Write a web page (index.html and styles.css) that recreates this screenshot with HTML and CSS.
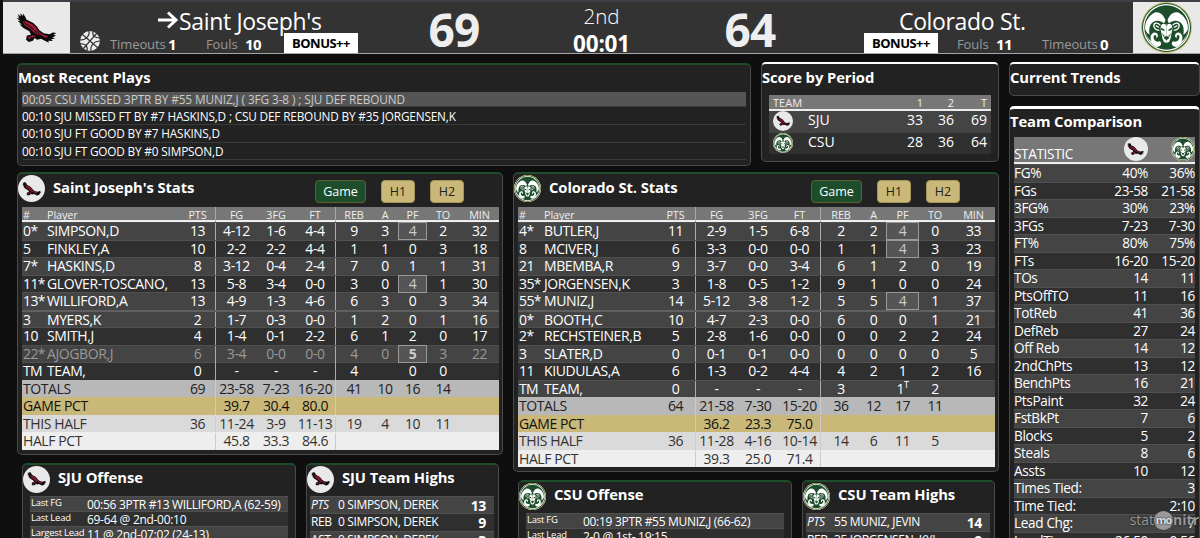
FILE: index.html
```html
<!DOCTYPE html>
<html lang="en">
<head>
    <meta charset="UTF-8">
    <meta name="viewport" content="width=device-width, initial-scale=1.0">
    <title>StatMonitr - Saint Joseph's vs Colorado St.</title>
    <link rel="stylesheet" href="styles.css">
</head>
<body>

<!-- shared logos -->
<svg class="defs" width="0" height="0">
    <symbol id="hawk" viewBox="0 0 124 92">
        <path fill="#0c0a0b" d="M1 8 9 14 4 3 14 11 12 1 21 9 20 1 28 12 31 20 52 31 64 42 70 52 84 62 102 65 112 60 123 61 114 67 122 70 111 74 119 79 107 80 112 86 98 85 100 91 86 84 76 79 64 82 56 77 51 85 38 89 30 82 32 70 45 66 40 56 22 46 10 35 17 36 4 24 13 25 1 15 10 17Z"/>
        <path fill="#9e1b34" d="M19 25 32 26 50 35 61 45 66 55 84 67 98 71 92 77 76 70 62 64 52 58 42 48 26 38Z"/>
        <path fill="#9e1b34" d="M35 74 50 68 62 70 54 74 44 75 42 83Z"/>
        <path stroke="#0c0a0b" stroke-width="3" fill="none" d="M24 30 48 46 62 60M62 56 84 76"/>
    </symbol>
    <symbol id="ram" viewBox="0 0 100 100">
        <circle cx="50" cy="50" r="50" fill="#c8c372"/>
        <circle cx="50" cy="50" r="48" fill="#1e4d2b"/>
        <circle cx="50" cy="50" r="46" fill="#fff"/>
        <circle cx="50" cy="50" r="43.5" fill="#1e4d2b"/>
        <g id="ram-half">
            <path fill="#fff" d="M48 36C44 24 35 18 26 21C15 27 7 39 8 53C10 59 13 62 17 64C15 53 17 43 24 39C31 35 40 37 45 42Z"/>
            <path fill="#fff" d="M9 58C11 72 19 83 30 88C40 88 42 80 37 77C30 80 23 73 25 67C27 63 31 65 30 71C36 68 33 59 26 60C18 62 17 72 21 78C14 73 11 66 9 58Z"/>
            <path fill="none" stroke="#fff" stroke-width="2.5" d="M38 46C33 39 25 41 25 47C26 53 31 56 36 55M29 46 35 50"/>
            <path fill="#fff" d="M50 43H42C38 46 38 51 39 56L42 71C44 78 46 80 50 80V75L45 71 46 67H50Z"/>
            <path fill="#1e4d2b" d="M39 50 46 54 46 57 40 55ZM41 61 44 68 46 66Z"/>
            <path fill="#1e4d2b" d="M47 44 50 47V43Z"/>
        </g>
        <use href="#ram-half" transform="matrix(-1 0 0 1 100 0)"/>
    </symbol>
</svg>

<header class="scoreboard">
    <div class="team-logo"><svg class="hawk-lg"><use href="#hawk"/></svg></div>
    <div class="team home">
        <div class="team-name">
            <svg class="arrow" viewBox="0 0 22 18"><path d="M1 9H19M11 1.5 19 9 11 16.5"/></svg><span>Saint Joseph's</span>
        </div>
        <div class="team-status">
            <svg class="ball" viewBox="0 0 22 22">
                <circle cx="11" cy="11" r="10.5" fill="#eee"/>
                <path d="M3 4 19 18M18 3 4 19M10 .5C11 6 7 10 .5 10M21.5 11C15 11 11 15 12 21.5M14 1C13 6 16 8 21 8M1 14C6 13 9 16 8 21"/>
            </svg>
            <span class="label">Timeouts</span><b class="to">1</b>
            <span class="label fouls">Fouls</span><b class="pf">10</b>
            <span class="bonus">BONUS++</span>
        </div>
    </div>
    <div class="score">69</div>
    <div class="clock">
        <div class="period">2nd</div>
        <div class="time">00:01</div>
    </div>
    <div class="score">64</div>
    <div class="team away">
        <div class="team-name"><span>Colorado St.</span></div>
        <div class="team-status">
            <span class="bonus">BONUS++</span>
            <span class="label fouls">Fouls</span><b class="pf">11</b>
            <span class="label timeouts">Timeouts</span><b class="to">0</b>
        </div>
    </div>
    <div class="team-logo"><svg class="ram-lg"><use href="#ram"/></svg></div>
</header>

<main class="board">
    <div class="main-col">
        <div class="top-row">
            <section class="panel plays">
                <h2>Most Recent Plays</h2>
                <ul>
                    <li class="latest">00:05 CSU MISSED 3PTR BY #55 MUNIZ,J ( 3FG 3-8 ) ; SJU DEF REBOUND</li>
                    <li>00:10 SJU MISSED FT BY #7 HASKINS,D ; CSU DEF REBOUND BY #35 JORGENSEN,K</li>
                    <li>00:10 SJU FT GOOD BY #7 HASKINS,D</li>
                    <li>00:10 SJU FT GOOD BY #0 SIMPSON,D</li>
                </ul>
            </section>
            <section class="panel neutral periods">
                <h2>Score by Period</h2>
                <div class="period-table">
                    <div class="period-row head"><span>TEAM</span><span></span><span>1</span><span>2</span><span>T</span></div>
                    <div class="period-row"><span class="badge"><svg><use href="#hawk"/></svg></span><span>SJU</span><span>33</span><span>36</span><span>69</span></div>
                    <div class="period-row"><span class="badge ram"><svg><use href="#ram"/></svg></span><span>CSU</span><span>28</span><span>36</span><span>64</span></div>
                </div>
            </section>
        </div>

        <div class="team-row">
            <div class="team-col">
                <section class="panel stats">
                    <div class="panel-head">
                        <span class="badge"><svg><use href="#hawk"/></svg></span>
                        <h2>Saint Joseph's Stats</h2>
                        <div class="tabs"><button class="active">Game</button><button>H1</button><button>H2</button></div>
                    </div>
                    <div class="box-score home-box" id="homeBox"></div>
                </section>
                <div class="sub-row">
                    <section class="panel offense">
                        <div class="panel-head"><span class="badge"><svg><use href="#hawk"/></svg></span><h2>SJU Offense</h2></div>
                        <div class="info-row"><span>Last FG</span><span>00:56 3PTR #13 WILLIFORD,A (62-59)</span></div>
                        <div class="info-row"><span>Last Lead</span><span>69-64 @ 2nd-00:10</span></div>
                        <div class="info-row"><span>Largest Lead</span><span>11 @ 2nd-07:02 (24-13)</span></div>
                    </section>
                    <section class="panel highs">
                        <div class="panel-head"><span class="badge"><svg><use href="#hawk"/></svg></span><h2>SJU Team Highs</h2></div>
                        <div class="high-row"><i>PTS</i><span>0 SIMPSON, DEREK</span><b>13</b></div>
                        <div class="high-row"><span>REB</span><span>0 SIMPSON, DEREK</span><b>9</b></div>
                        <div class="high-row"><span>AST</span><span>0 SIMPSON, DEREK</span><b>3</b></div>
                    </section>
                </div>
            </div>

            <div class="team-col">
                <section class="panel stats">
                    <div class="panel-head">
                        <span class="badge ram"><svg><use href="#ram"/></svg></span>
                        <h2>Colorado St. Stats</h2>
                        <div class="tabs"><button class="active">Game</button><button>H1</button><button>H2</button></div>
                    </div>
                    <div class="box-score away-box" id="awayBox"></div>
                </section>
                <div class="sub-row">
                    <section class="panel offense">
                        <div class="panel-head"><span class="badge ram"><svg><use href="#ram"/></svg></span><h2>CSU Offense</h2></div>
                        <div class="info-row"><span>Last FG</span><span>00:19 3PTR #55 MUNIZ,J (66-62)</span></div>
                        <div class="info-row"><span>Last Lead</span><span>2-0 @ 1st- 19:15</span></div>
                    </section>
                    <section class="panel highs">
                        <div class="panel-head"><span class="badge ram"><svg><use href="#ram"/></svg></span><h2>CSU Team Highs</h2></div>
                        <div class="high-row"><i>PTS</i><span>55 MUNIZ, JEVIN</span><b>14</b></div>
                        <div class="high-row"><span>REB</span><span>35 JORGENSEN, KYL</span><b>9</b></div>
                    </section>
                </div>
            </div>
        </div>
    </div>

    <div class="side-col">
        <section class="panel neutral trends"><h2>Current Trends</h2></section>
        <section class="panel neutral comparison">
            <h2>Team Comparison</h2>
            <div class="compare" id="compare">
                <div class="compare-row head">
                    <span>STATISTIC</span>
                    <span class="badge"><svg><use href="#hawk"/></svg></span>
                    <span class="badge ram"><svg><use href="#ram"/></svg></span>
                </div>
            </div>
        </section>
    </div>
</main>

<div class="watermark"><span>stat</span><span class="disc">mo</span><b>nitr</b></div>

<script src="script.js"></script>
</body>
</html>
```
FILE: styles.css
```css
* {
    box-sizing: border-box;
}
body {
    margin: 0;
    height: 538px;
    overflow: hidden;
    background-color: #0f0f0f;
    color: #fff;
    font-family: "Open Sans", "Noto Sans", sans-serif;
    font-size: 14px;
}
h2, ul {
    margin: 0;
    padding: 0;
}
.defs {
    position: absolute;
}

/* scoreboard */
.scoreboard {
    display: grid;
    grid-template-columns: 67px 338px 92px 203px 94px 336px 67px;
    height: 54px;
    margin-left: 3px;
    background-color: #333;
    border-top: 2px solid #3f3f46;
    border-bottom: 1px solid #a5a5a5;
}
.team-logo {
    display: flex;
    justify-content: center;
    align-items: center;
    background-color: #e9e9e9;
}
.hawk-lg {
    width: 41px;
    height: 30px;
}
.ram-lg {
    width: 51px;
    height: 51px;
}
.team-name {
    display: flex;
    align-items: center;
    height: 30px;
    padding-top: 7px;
    font-size: 23px;
    line-height: 30px;
    letter-spacing: -0.35px;
    white-space: nowrap;
}
.home .team-name {
    padding-left: 87px;
}
.away .team-name {
    padding-left: 102px;
}
.arrow {
    width: 22px;
    height: 18px;
    margin-top: -2px;
    fill: none;
    stroke: #fff;
    stroke-width: 3;
}
.team-status {
    display: flex;
    align-items: center;
    height: 21px;
    font-size: 14px;
}
.ball {
    width: 22px;
    height: 22px;
    margin: -3px 9px 0 9px;
    fill: none;
    stroke: #333;
    stroke-width: 1.2;
}
.label {
    width: 58px;
    padding-top: 3px;
    color: #999;
    font-size: 13px;
    letter-spacing: -0.1px;
}
.label.fouls {
    width: 39px;
}
.team-status b {
    padding-top: 2px;
    font-size: 15px;
    letter-spacing: -0.5px;
}
.home .to {
    width: 38px;
}
.home .pf {
    width: 39px;
}
.away .pf {
    width: 46px;
}
.bonus {
    width: 74px;
    height: 20px;
    background-color: #fff;
    color: #000;
    font-size: 13px;
    font-weight: bold;
    line-height: 20px;
    letter-spacing: -0.5px;
    text-align: center;
    z-index: 1;
}
.away .bonus {
    margin: 0 19px 0 67px;
}
.score {
    height: 51px;
    color: #eee;
    font-size: 46px;
    font-weight: bold;
    line-height: 55px;
    letter-spacing: -0.8px;
    text-align: center;
}
.clock {
    text-align: center;
}
.period {
    height: 26px;
    font-size: 20.5px;
    font-weight: 300;
    line-height: 28px;
}
.time {
    height: 25px;
    font-size: 22.5px;
    font-weight: bold;
    line-height: 31px;
    letter-spacing: -0.2px;
}

/* panels */
.board {
    display: flex;
    gap: 10px;
    height: 484px;
    padding: 8px 0 0 17px;
    overflow: hidden;
}
.main-col {
    flex: none;
    width: 982px;
}
.panel {
    background-color: #222;
    border: 1px solid #4a4a4a;
    border-top: 2px solid #1e4d2b;
    border-radius: 5px;
}
.panel.neutral {
    border-top-color: #fff;
}
h2 {
    font-size: 14.8px;
    line-height: 20px;
    letter-spacing: -0.1px;
    white-space: nowrap;
}
.badge {
    display: flex;
    justify-content: center;
    align-items: center;
    width: 27px;
    height: 27px;
    border-radius: 50%;
    background-color: #e9e9e9;
}
.badge svg {
    width: 72%;
    height: 58%;
}
.badge.ram svg {
    width: 100%;
    height: 100%;
}
.top-row {
    display: flex;
    align-items: flex-start;
    gap: 10px;
    height: 110px;
}
.plays {
    width: 734px;
    height: 103px;
    margin-top: 1px;
}
.plays h2 {
    padding-top: 2px;
}
.plays ul {
    margin: 5px 4px 0;
    list-style: none;
    font-size: 11.8px;
    letter-spacing: -0.17px;
}
.plays li {
    height: 17.3px;
    border-bottom: 1px solid #3a3a3a;
    line-height: 16px;
    white-space: pre;
}
.plays .latest {
    height: 15px;
    margin-bottom: 1px;
    background-color: #555;
    color: #ccc;
    line-height: 14px;
    letter-spacing: -0.1px;
}
.periods {
    width: 238px;
    height: 100px;
}
.periods h2 {
    padding-top: 3px;
}
.period-table {
    margin: 8px 7px;
}
.period-row {
    display: grid;
    grid-template-columns: 39px 75px 40px 31px 33px;
    height: 21.5px;
    background-color: #444;
    line-height: 17px;
}
.period-row:last-child {
    background-color: #303030;
}
.period-row.head {
    height: 16px;
    background-color: #777;
    border-bottom: 2px solid #eee;
    color: #eee;
    font-size: 11px;
    line-height: 16px;
}
.period-row.head span:first-child {
    padding-left: 4px;
}
.period-row span:nth-child(n+3) {
    text-align: right;
}
.period-row .badge {
    width: 20px;
    height: 20px;
    margin: 0 0 0 4px;
}

/* box scores */
.team-row {
    display: flex;
    align-items: flex-start;
    gap: 10px;
}
.team-col {
    width: 486px;
}
.stats {
    padding: 0 3px 4px 4px;
}
.panel-head {
    display: flex;
    align-items: flex-start;
    height: 33px;
}
.panel-head .badge {
    flex: none;
    margin: 1px 8px 0 -4px;
}
.panel-head h2 {
    width: 262px;
    padding-top: 3px;
}
.tabs {
    display: flex;
    padding-top: 6px;
}
.tabs button {
    width: 34px;
    height: 23px;
    margin-left: 15px;
    padding: 0;
    border: 1px solid #a89658;
    border-radius: 4px;
    background-color: #c9b877;
    color: #222;
    font-family: inherit;
    font-size: 12.5px;
}
.tabs .active {
    width: 51px;
    margin-left: 0;
    border-color: #5f6030;
    background-color: #1e4d2b;
    color: #fff;
    font-weight: 500;
}
.box-row {
    display: grid;
    height: 17.5px;
    background-color: #444;
    border-top: 1px solid #505050;
    font-size: 14px;
    line-height: 16px;
    letter-spacing: -0.4px;
    text-align: center;
}
.home-box .box-row {
    grid-template-columns: 25px 133px 36px 41px 38px 41px 36px 26px 29px 32px 41px;
}
.away-box .box-row {
    grid-template-columns: 26px 112px 40px 41px 42px 42px 40px 25px 33px 32px 45px;
}
.box-row span {
    white-space: nowrap;
}
.box-row span:nth-child(-n+2) {
    text-align: left;
}
.box-row span:first-child {
    padding-left: 1px;
    letter-spacing: -0.6px;
}
.box-row span:nth-child(3),
.box-row span:nth-child(6) {
    border-right: 1px solid #aaa;
}
.box-row.head {
    height: 15px;
    background-color: #777;
    border-top: 0;
    border-bottom: 2px solid #eee;
    color: #eee;
    font-size: 10.8px;
    line-height: 15px;
    letter-spacing: -0.1px;
}
.box-row.dark {
    background-color: #2f2f2f;
}
.box-row.bench {
    border-top: 2px solid #606060;
    line-height: 15px;
}
.box-row.out {
    color: #999;
}
.box-row .trouble {
    margin-top: -1px;
    background-color: #555;
    border: 1px solid #999;
    color: #ccc;
    line-height: 16px;
}
.box-row.out .trouble {
    font-weight: bold;
}
.box-row sup {
    font-size: 9px;
    line-height: 0;
}
.box-row.summary span:first-child {
    grid-column: span 2;
    letter-spacing: -0.4px;
}
.box-row.totals {
    background-color: #b8b8b8;
    border-color: #b8b8b8;
    color: #222;
}
.box-row.game-pct {
    background-color: #c9b877;
    border-color: #c9b877;
    color: #111;
}
.box-row.half {
    background-color: #dadada;
    border-color: #dadada;
    color: #333;
}
.box-row.half-pct {
    background-color: #eee;
    border-color: #eee;
    color: #333;
}
.box-row.summary span:nth-child(2) {
    border-right: 1px solid #ccc;
    text-align: center;
}
.box-row.summary span:nth-child(3),
.box-row.summary span:nth-child(6) {
    border-right: 0;
}
.box-row.summary span:nth-child(5) {
    border-right: 1px solid #ccc;
}

/* offense and highs */
.sub-row {
    display: flex;
    gap: 10px;
    padding: 8px 4px 0 5px;
}
.sub-row .panel {
    height: 150px;
}
.sub-row .panel-head {
    height: 31px;
}
.sub-row h2 {
    width: auto;
    padding-top: 2px;
}
.offense {
    width: 274px;
    padding: 0 7px;
}
.offense .badge {
    margin-left: -7px;
}
.highs {
    width: 193px;
    padding: 0 4px 0 3px;
}
.highs .badge {
    margin-left: -3px;
}
.info-row {
    display: grid;
    grid-template-columns: 57px 1fr;
    height: 15px;
    background-color: #444;
    border-top: 1px solid #505050;
    font-size: 12px;
    line-height: 15px;
    letter-spacing: -0.3px;
    white-space: nowrap;
}
.info-row span:first-child {
    padding-left: 1px;
    font-size: 9.5px;
    line-height: 12px;
    letter-spacing: -0.25px;
}
.info-row:nth-child(odd),
.high-row:nth-child(odd) {
    background-color: #2f2f2f;
}
.high-row {
    display: grid;
    grid-template-columns: 27px 1fr 32px;
    height: 17.5px;
    background-color: #444;
    border-top: 1px solid #505050;
    padding: 0 8px 0 1px;
    font-size: 12px;
    line-height: 15px;
    letter-spacing: -0.35px;
    white-space: nowrap;
}
.high-row b {
    font-size: 14px;
    line-height: 18px;
    text-align: right;
}

/* side column */
.side-col {
    flex: none;
    width: 191px;
}
.trends {
    height: 34px;
    padding-top: 3px;
}
.comparison {
    height: 520px;
    margin-top: 10px;
    padding-top: 2px;
    border-top-width: 3px;
}
.compare {
    margin: 6px 4px 0;
}
.compare-row {
    display: grid;
    grid-template-columns: 1fr 48px 47px;
    height: 17.5px;
    background-color: #444;
    border-top: 1px solid #505050;
    font-size: 13.6px;
    line-height: 16px;
    letter-spacing: -0.35px;
    white-space: nowrap;
}
.compare-row:nth-child(odd) {
    background-color: #2f2f2f;
}
.compare-row span:nth-child(n+2) {
    text-align: right;
}
.compare-row.head {
    height: 27px;
    background-color: #777;
    border-top: 0;
    border-bottom: 2px solid #eee;
    line-height: 33px;
}
.compare-row.head .badge {
    justify-self: end;
    width: 24px;
    height: 24px;
}

.watermark {
    position: absolute;
    right: 1px;
    bottom: 8px;
    display: flex;
    align-items: center;
    color: #999;
    font-size: 14px;
    line-height: 20px;
    text-shadow: 0 0 2px #111;
}
.watermark .disc {
    width: 19px;
    height: 19px;
    border-radius: 50%;
    background-color: #999;
    color: #ddd;
    font-size: 11px;
    font-weight: bold;
    line-height: 17px;
    letter-spacing: -1px;
    text-align: center;
}
```
FILE: script.js
```js
const columns = ['#', 'Player', 'PTS', 'FG', '3FG', 'FT', 'REB', 'A', 'PF', 'TO', 'MIN'];

// a "!" after the fouls number marks a player in foul trouble
const home = [
    ['', '0*|SIMPSON,D|13|4-12|1-6|4-4|9|3|4!|2|32'],
    ['dark', '5|FINKLEY,A|10|2-2|2-2|4-4|1|1|0|3|18'],
    ['', '7*|HASKINS,D|8|3-12|0-4|2-4|7|0|1|1|31'],
    ['dark', '11*|GLOVER-TOSCANO,|13|5-8|3-4|0-0|3|0|4!|1|30'],
    ['', '13*|WILLIFORD,A|13|4-9|1-3|4-6|6|3|0|3|34'],
    ['bench', '3|MYERS,K|2|1-7|0-3|0-0|1|2|0|1|16'],
    ['dark', '10|SMITH,J|4|1-4|0-1|2-2|6|1|2|0|17'],
    ['out', '22*|AJOGBOR,J|6|3-4|0-0|0-0|4|0|5!|3|22'],
    ['dark', 'TM|TEAM,|0|-|-|-|4||0|0|'],
    ['summary totals', 'TOTALS|69|23-58|7-23|16-20|41|10|16|14|'],
    ['summary game-pct', 'GAME PCT||39.7|30.4|80.0|||||'],
    ['summary half', 'THIS HALF|36|11-24|3-9|11-13|19|4|10|11|'],
    ['summary half-pct', 'HALF PCT||45.8|33.3|84.6|||||']
];

const away = [
    ['', '4*|BUTLER,J|11|2-9|1-5|6-8|2|2|4!|0|33'],
    ['dark', '8|MCIVER,J|6|3-3|0-0|0-0|1|1|4!|3|23'],
    ['', '21|MBEMBA,R|9|3-7|0-0|3-4|6|1|2|0|19'],
    ['dark', '35*|JORGENSEN,K|3|1-8|0-5|1-2|9|1|0|0|24'],
    ['', '55*|MUNIZ,J|14|5-12|3-8|1-2|5|5|4!|1|37'],
    ['bench', '0*|BOOTH,C|10|4-7|2-3|0-0|6|0|0|1|21'],
    ['dark', '2*|RECHSTEINER,B|5|2-8|1-6|0-0|0|0|2|2|24'],
    ['', '3|SLATER,D|0|0-1|0-1|0-0|0|0|0|0|5'],
    ['dark', '11|KIUDULAS,A|6|1-3|0-2|4-4|4|2|1|2|16'],
    ['', 'TM|TEAM,|0|-|-|-|3||1<sup>T</sup>|2|'],
    ['summary totals', 'TOTALS|64|21-58|7-30|15-20|36|12|17|11|'],
    ['summary game-pct', 'GAME PCT||36.2|23.3|75.0|||||'],
    ['summary half', 'THIS HALF|36|11-28|4-16|10-14|14|6|11|5|'],
    ['summary half-pct', 'HALF PCT||39.3|25.0|71.4|||||']
];

const comparison = [
    ['FG%', '40%', '36%'], ['FGs', '23-58', '21-58'], ['3FG%', '30%', '23%'],
    ['3FGs', '7-23', '7-30'], ['FT%', '80%', '75%'], ['FTs', '16-20', '15-20'],
    ['TOs', '14', '11'], ['PtsOffTO', '11', '16'], ['TotReb', '41', '36'],
    ['DefReb', '27', '24'], ['Off Reb', '14', '12'], ['2ndChPts', '13', '12'],
    ['BenchPts', '16', '21'], ['PtsPaint', '32', '24'], ['FstBkPt', '7', '6'],
    ['Blocks', '5', '2'], ['Steals', '8', '6'], ['Assts', '10', '12'],
    ['Times Tied:', '', '3'], ['Time Tied:', '', '2:10'], ['Lead Chg:', '', '7'],
    ['LeadTime', '26:50', '0:56']
];

function addRow(parent, className, cells) {
    const row = document.createElement('div');
    row.className = className;
    row.innerHTML = cells.map(cell => cell.endsWith('!')
        ? `<span class="trouble">${cell.slice(0, -1)}</span>`
        : `<span>${cell}</span>`).join('');
    parent.appendChild(row);
}

function fillBox(id, rows) {
    const box = document.getElementById(id);
    addRow(box, 'box-row head', columns);
    rows.forEach(([type, line]) => addRow(box, 'box-row ' + type, line.split('|')));
}

fillBox('homeBox', home);
fillBox('awayBox', away);

const compare = document.getElementById('compare');
comparison.forEach(cells => addRow(compare, 'compare-row', cells));
```
